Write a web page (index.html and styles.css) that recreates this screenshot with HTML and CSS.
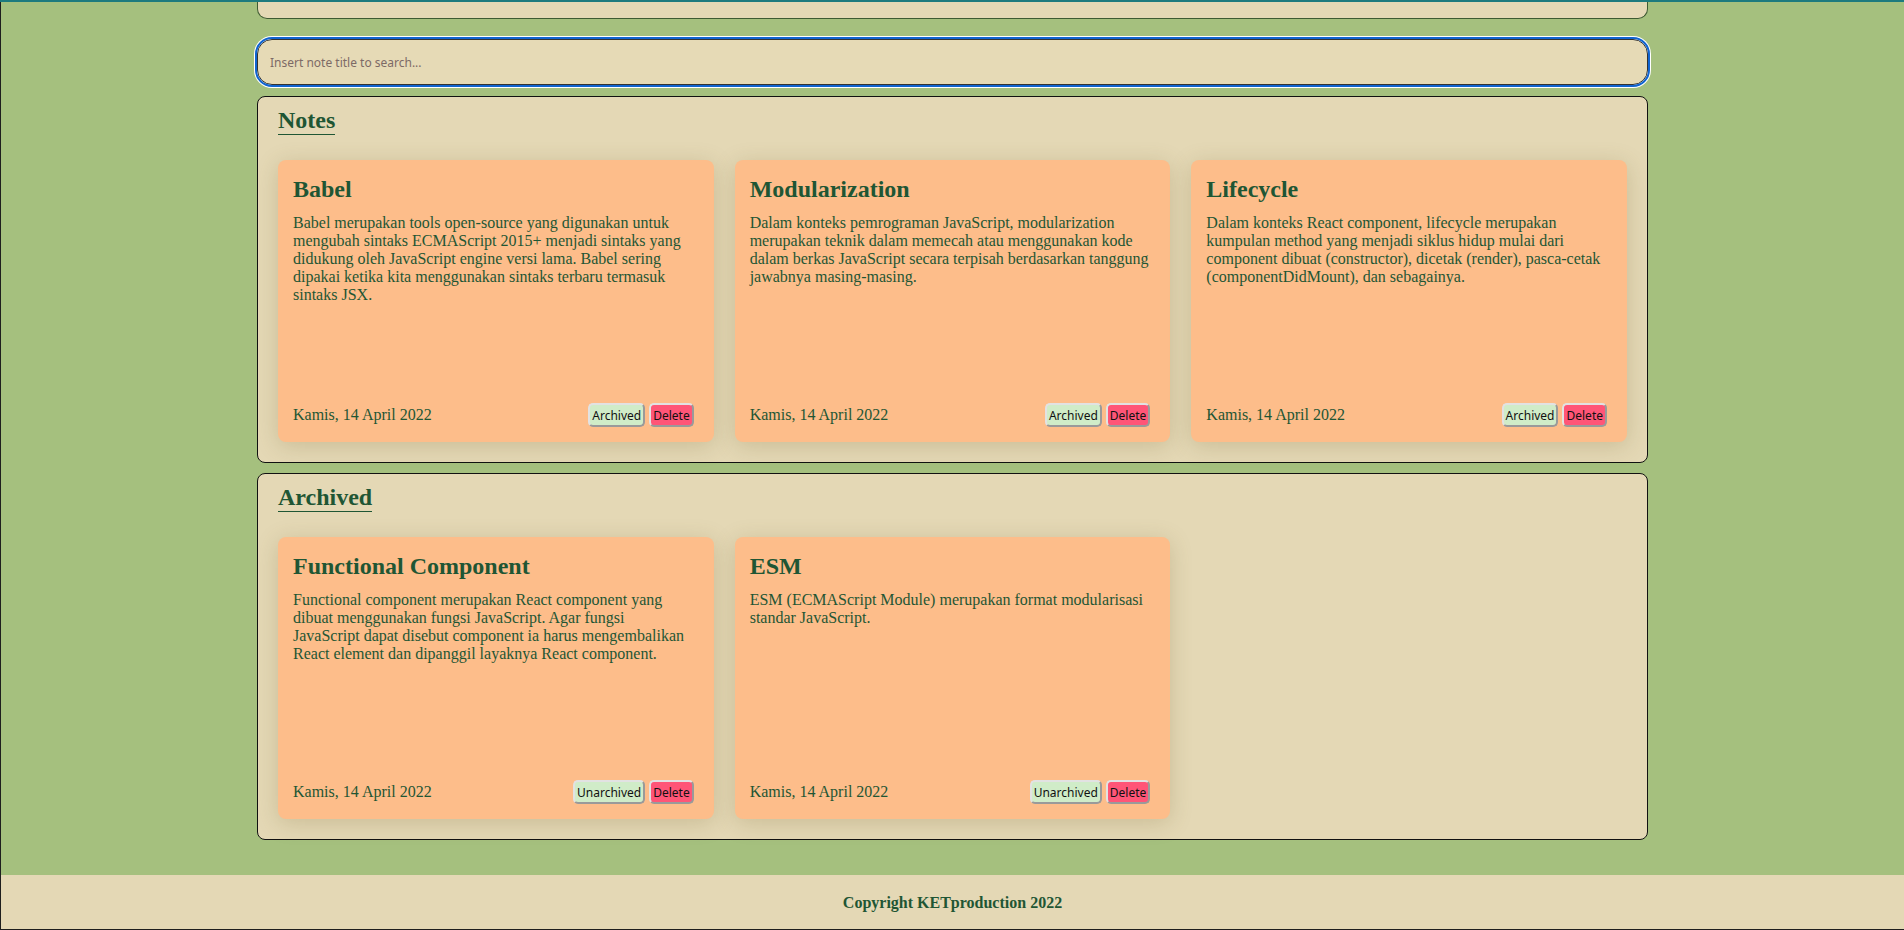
FILE: index.html
```html
<!DOCTYPE html>
<html lang="id">
<head>
<meta charset="utf-8">
<title>Notes App</title>
<link rel="stylesheet" href="styles.css">
</head>
<body>
<div class="topline"></div>
<main class="container">
  <div class="header-box"></div>
  <input class="search" type="text" placeholder="Insert note title to search...">
  <section class="section">
    <h2 class="section-title">Notes</h2>
    <div class="grid">
      <article class="card">
        <h3 class="card-title">Babel</h3>
        <p class="card-body">Babel merupakan tools open-source yang digunakan untuk mengubah sintaks ECMAScript 2015+ menjadi sintaks yang didukung oleh JavaScript engine versi lama. Babel sering dipakai ketika kita menggunakan sintaks terbaru termasuk sintaks JSX.</p>
        <div class="card-foot">
          <span class="date">Kamis, 14 April 2022</span>
          <div class="actions"><button class="btn btn-archive">Archived</button><button class="btn btn-delete">Delete</button></div>
        </div>
      </article>
      <article class="card">
        <h3 class="card-title">Modularization</h3>
        <p class="card-body">Dalam konteks pemrograman JavaScript, modularization merupakan teknik dalam memecah atau menggunakan kode dalam berkas JavaScript secara terpisah berdasarkan tanggung jawabnya masing-masing.</p>
        <div class="card-foot">
          <span class="date">Kamis, 14 April 2022</span>
          <div class="actions"><button class="btn btn-archive">Archived</button><button class="btn btn-delete">Delete</button></div>
        </div>
      </article>
      <article class="card">
        <h3 class="card-title">Lifecycle</h3>
        <p class="card-body">Dalam konteks React component, lifecycle merupakan kumpulan method yang menjadi siklus hidup mulai dari component dibuat (constructor), dicetak (render), pasca-cetak (componentDidMount), dan sebagainya.</p>
        <div class="card-foot">
          <span class="date">Kamis, 14 April 2022</span>
          <div class="actions"><button class="btn btn-archive">Archived</button><button class="btn btn-delete">Delete</button></div>
        </div>
      </article>
    </div>
  </section>
  <section class="section">
    <h2 class="section-title">Archived</h2>
    <div class="grid">
      <article class="card">
        <h3 class="card-title">Functional Component</h3>
        <p class="card-body">Functional component merupakan React component yang dibuat menggunakan fungsi JavaScript. Agar fungsi JavaScript dapat disebut component ia harus mengembalikan React element dan dipanggil layaknya React component.</p>
        <div class="card-foot">
          <span class="date">Kamis, 14 April 2022</span>
          <div class="actions"><button class="btn btn-archive">Unarchived</button><button class="btn btn-delete">Delete</button></div>
        </div>
      </article>
      <article class="card">
        <h3 class="card-title">ESM</h3>
        <p class="card-body">ESM (ECMAScript Module) merupakan format modularisasi standar JavaScript.</p>
        <div class="card-foot">
          <span class="date">Kamis, 14 April 2022</span>
          <div class="actions"><button class="btn btn-archive">Unarchived</button><button class="btn btn-delete">Delete</button></div>
        </div>
      </article>
    </div>
  </section>
</main>
<footer class="footer">Copyright KETproduction 2022</footer>
</body>
</html>
```
FILE: styles.css
```css
* { box-sizing: border-box; }

html, body {
  margin: 0;
  padding: 0;
}

body {
  background: #a5c07e;
  border-left: 1px solid #1e1e1e;
  font-family: "Liberation Serif", "Times New Roman", serif;
  color: #1f5634;
  min-height: 930px;
  display: flex;
  flex-direction: column;
}

.topline {
  position: fixed;
  top: 0;
  left: 0;
  right: 0;
  height: 2px;
  background: #1d7a7e;
  z-index: 5;
}

.container {
  width: 1391px;
  margin: 0 auto;
  flex: 1;
  display: flex;
  flex-direction: column;
  padding-bottom: 35px;
}

.header-box {
  height: 19px;
  background: #e4d8b5;
  border: 1px solid #3e5a32;
  border-top: none;
  border-radius: 0 0 10px 10px;
}

.search {
  display: block;
  width: 100%;
  height: 46px;
  margin: 20px 0 11px;
  padding: 0 12px;
  background: #e6dab6;
  border: 1px solid #333;
  border-radius: 15px;
  font-family: "Noto Sans", "DejaVu Sans", sans-serif;
  font-size: 12px;
  color: #333;
  outline: 2px solid #1064d0;
  box-shadow: 0 0 0 3px #ffffff;
}

.search::placeholder {
  color: #7d6a66;
}

.section {
  background: #e4d8b5;
  border: 1px solid #111;
  border-radius: 8px;
  padding: 10px 20px 20px;
  margin-bottom: 10px;
}

.section:last-child { margin-bottom: 0; }

.section-title {
  display: inline-block;
  margin: 0 0 25px;
  font-size: 24px;
  font-weight: bold;
  line-height: normal;
  border-bottom: 1px solid #1f5634;
}

.grid {
  display: grid;
  grid-template-columns: repeat(3, 1fr);
  gap: 21px;
}

.card {
  height: 282px;
  background: #fdbd8a;
  border-radius: 8px;
  padding: 16px 20px 15px 15px;
  display: flex;
  flex-direction: column;
  box-shadow: 0 4px 22px rgba(110, 90, 40, 0.22);
}

.card-title {
  margin: 0;
  font-size: 24px;
  font-weight: bold;
  line-height: normal;
}

.card-body {
  margin: 11px 0 0;
  font-size: 16px;
  line-height: 18px;
  flex: 1;
}

.card-foot {
  display: flex;
  align-items: center;
  justify-content: space-between;
  height: 24px;
}

.date {
  font-size: 16px;
}

.actions {
  display: flex;
  gap: 4px;
}

.btn {
  font-family: "Noto Sans", "DejaVu Sans", sans-serif;
  font-size: 12px;
  color: #111;
  height: 24px;
  padding: 0 2px;
  border-radius: 5px;
  border: 2px solid;
  border-color: #e2e2e2 #9a9a9a #9a9a9a #e2e2e2;
  cursor: pointer;
}

.btn-archive { background: #d0ecc8; }
.btn-delete { background: #ff5577; }

.footer {
  background: #e4d8b5;
  border-bottom: 1px solid #1e1e1e;
  padding: 18px 0 17px;
  text-align: center;
  font-weight: bold;
  font-size: 16px;
  line-height: 19px;
  color: #1f5634;
}
```
